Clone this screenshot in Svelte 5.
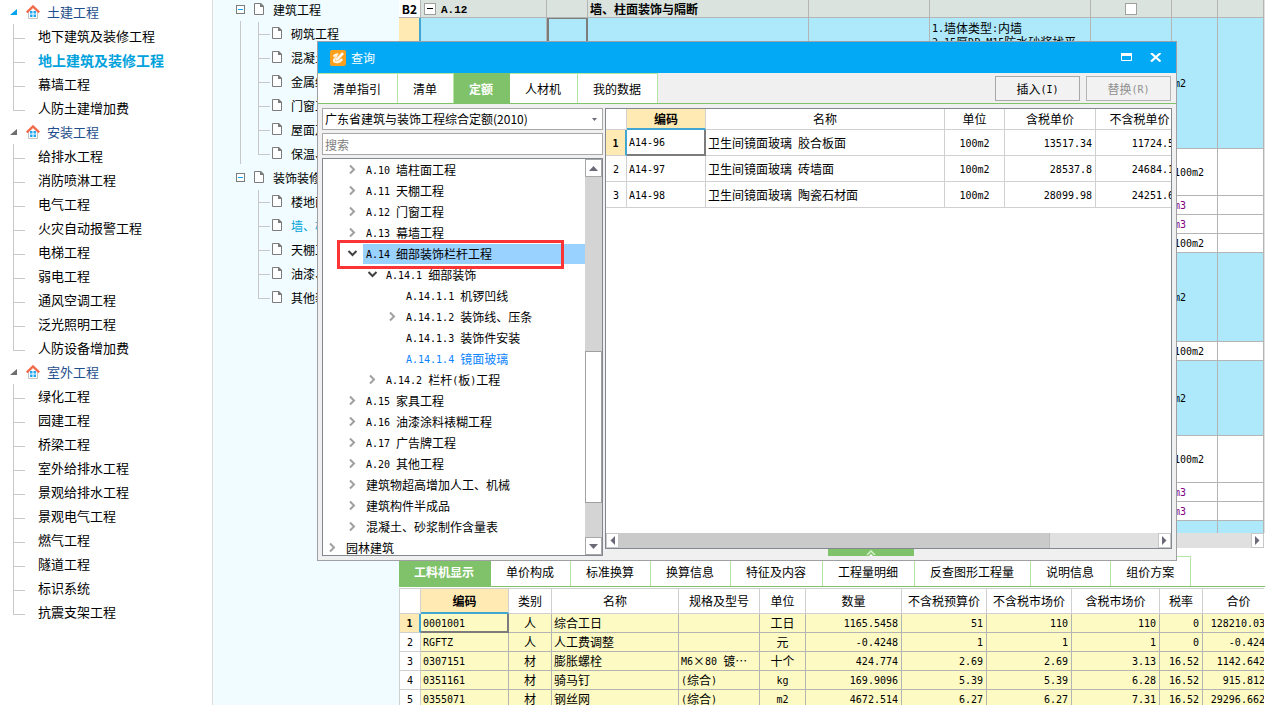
<script>
  const projects = [
    { name: '土建工程', active: true, items: ['地下建筑及装修工程', '地上建筑及装修工程', '幕墙工程', '人防土建增加费'] },
    { name: '安装工程', items: ['给排水工程', '消防喷淋工程', '电气工程', '火灾自动报警工程', '电梯工程', '弱电工程', '通风空调工程', '泛光照明工程', '人防设备增加费'] },
    { name: '室外工程', items: ['绿化工程', '园建工程', '桥梁工程', '室外给排水工程', '景观给排水工程', '景观电气工程', '燃气工程', '隧道工程', '标识系统', '抗震支架工程'] }
  ];
  const currentProject = '地上建筑及装修工程';

  const sections = [
    { name: '建筑工程', items: ['砌筑工程', '混凝土工程', '金属结构工程', '门窗工程', '屋面及防水工程', '保温、隔热工程'] },
    { name: '装饰装修工程', items: ['楼地面装饰工程', '墙、柱面装饰与隔断', '天棚工程', '油漆、涂料工程', '其他装饰工程'] }
  ];
  const currentSection = '墙、柱面装饰与隔断';

  const billRows = [
    { h: 47, unit: '100m2' },
    { h: 19, unit: 'm3', part: true },
    { h: 19, unit: 'm3', part: true },
    { h: 19, unit: '100m2' },
    { h: 89, unit: 'm2', item: true },
    { h: 19, unit: '100m2' },
    { h: 75, unit: 'm2', item: true },
    { h: 47, unit: '100m2' },
    { h: 19, unit: 'm3', part: true },
    { h: 19, unit: 'm3', part: true },
    { h: 60, unit: '', item: true }
  ];

  const detailTabs = ['工料机显示', '单价构成', '标准换算', '换算信息', '特征及内容', '工程量明细', '反查图形工程量', '说明信息', '组价方案'];
  const resourceHeads = ['编码', '类别', '名称', '规格及型号', '单位', '数量', '不含税预算价', '不含税市场价', '含税市场价', '税率', '合价'];
  const resources = [
    ['0001001', '人', '综合工日', '', '工日', '1165.5458', '51', '110', '110', '0', '128210.038'],
    ['RGFTZ', '人', '人工费调整', '', '元', '-0.4248', '1', '1', '1', '0', '-0.4248'],
    ['0307151', '材', '膨胀螺栓', 'M6×80 镀…', '十个', '424.774', '2.69', '2.69', '3.13', '16.52', '1142.6421'],
    ['0351161', '材', '骑马钉', '(综合)', 'kg', '169.9096', '5.39', '5.39', '6.28', '16.52', '915.8127'],
    ['0355071', '材', '钢丝网', '(综合)', 'm2', '4672.514', '6.27', '6.27', '7.31', '16.52', '29296.6628']
  ];
  const resourceAlign = ['l', 'c', 'l', 'l', 'c', 'r', 'r', 'r', 'r', 'r', 'r'];

  const queryTabs = ['清单指引', '清单', '定额', '人材机', '我的数据'];
  const chapters = [
    { d: 1, s: 'shut', t: 'A.10 墙柱面工程' },
    { d: 1, s: 'shut', t: 'A.11 天棚工程' },
    { d: 1, s: 'shut', t: 'A.12 门窗工程' },
    { d: 1, s: 'shut', t: 'A.13 幕墙工程' },
    { d: 1, s: 'open', t: 'A.14 细部装饰栏杆工程', marked: true },
    { d: 2, s: 'open', t: 'A.14.1 细部装饰' },
    { d: 3, t: 'A.14.1.1 机锣凹线' },
    { d: 3, s: 'shut', t: 'A.14.1.2 装饰线、压条' },
    { d: 3, t: 'A.14.1.3 装饰件安装' },
    { d: 3, t: 'A.14.1.4 镜面玻璃', current: true },
    { d: 2, s: 'shut', t: 'A.14.2 栏杆(板)工程' },
    { d: 1, s: 'shut', t: 'A.15 家具工程' },
    { d: 1, s: 'shut', t: 'A.16 油漆涂料裱糊工程' },
    { d: 1, s: 'shut', t: 'A.17 广告牌工程' },
    { d: 1, s: 'shut', t: 'A.20 其他工程' },
    { d: 1, s: 'shut', t: '建筑物超高增加人工、机械' },
    { d: 1, s: 'shut', t: '建筑构件半成品' },
    { d: 1, s: 'shut', t: '混凝土、砂浆制作含量表' },
    { d: 0, s: 'shut', t: '园林建筑' }
  ];
  const quotaHeads = ['编码', '名称', '单位', '含税单价', '不含税单价'];
  const quotas = [
    ['A14-96', '卫生间镜面玻璃 胶合板面', '100m2', '13517.34', '11724.53'],
    ['A14-97', '卫生间镜面玻璃 砖墙面', '100m2', '28537.8', '24684.11'],
    ['A14-98', '卫生间镜面玻璃 陶瓷石材面', '100m2', '28099.98', '24251.67']
  ];
  const quotaAlign = ['l', 'l', 'c', 'r', 'r'];

  // Latin runs are set in a half-width monospace face beside the full-width characters.
  const runs = (text) => text.split(/([\x20-\x7e]+)/).filter(Boolean).map((t) => ({ t, latin: /^[\x20-\x7e]/.test(t) }));
</script>

{#snippet mixed(text)}{#each runs(text) as r}{#if r.latin}<span class="latin">{r.t}</span>{:else}{r.t}{/if}{/each}{/snippet}

{#snippet page()}
  <svg class="page" width="10" height="12" viewBox="0 0 10 12" aria-hidden="true"><path d="M.5 .5h6l3 3v8h-9z" fill="#fff" stroke="#7c7c7c" /><path d="M6 0h1l3 3v1H6z" fill="#7c7c7c" /></svg>
{/snippet}

{#snippet arrow(dir)}
  <svg width="9" height="9" viewBox="0 0 9 9" aria-hidden="true">
    <path fill="#6a6a78" d={{ up: 'M0 7h9L4.500 2z', down: 'M0 2h9L4.500 7z', left: 'M7 0v9L2.500 4.500z', right: 'M2 0v9L6.500 4.500z' }[dir]} />
  </svg>
{/snippet}

<div class="app">
  <nav class="projects" aria-label="项目">
    {#each projects as p}
      <div class="group" class:active={p.active}>
        <svg class="tri" width="8" height="8" viewBox="0 0 8 8" aria-hidden="true"><path d="M7 1v6H0z" fill="currentColor" /></svg>
        <svg width="14" height="14" viewBox="0 0 14 14" aria-hidden="true">
          <path d="M2.500 6.500v7h9v-7L7 2.500z" fill="#fff" stroke="#c4c4c4" />
          <path d="M.8 7.400L7 1.400l6.200 6" fill="none" stroke="#f2694b" stroke-width="2.200" />
          <path d="M4 6h2.500v2.500H4zM7.500 6H10v2.500H7.500zM4 9.500h2.500V12H4zM7.500 9.500H10V12H7.500z" fill="#1ea8f3" />
        </svg>
        <span>{p.name}</span>
      </div>
      <ul>
        {#each p.items as it}
          <li class:current={it === currentProject}>{it}</li>
        {/each}
      </ul>
    {/each}
  </nav>

  <nav class="sections" aria-label="分部">
    {#each sections as s, i}
      <div class="section" class:last={i === sections.length - 1}>
        <div class="head"><span class="fold"></span>{@render page()}<span>{s.name}</span></div>
        <ul>
          {#each s.items as it}
            <li class:current={it === currentSection}>{@render page()}<span>{it}</span></li>
          {/each}
        </ul>
      </div>
    {/each}
  </nav>

  <main>
    <div class="bill">
      <table class="bill-table">
        <colgroup><col class="w22" /><col class="w126" /><col class="w41" /><col class="w221" /><col class="w121" /><col class="w161" /><col class="w81" /><col class="w46" /><col class="w46" /></colgroup>
        <tbody>
          <tr class="part-row">
            <th><b>B2</b></th>
            <td><span class="minus"></span><b class="code">A.12</b></td>
            <td></td>
            <td><b>墙、柱面装饰与隔断</b></td>
            <td></td><td></td>
            <td class="c"><input type="checkbox" aria-label="锁定" /></td>
            <td></td><td></td>
          </tr>
          <tr class="item first">
            <th class="sel"></th>
            <td class="stem"></td>
            <td class="focus"></td>
            <td></td><td></td>
            <td class="feature">{@render mixed('1.墙体类型:内墙')}<br />{@render mixed('2.15厚DP M15防水砂浆找平')}</td>
            <td></td>
            <td>{@render mixed('m2')}</td>
            <td></td>
          </tr>
          {#each billRows as r}
            <tr class:item={r.item} style:height="{r.h}px">
              <th></th><td></td><td></td><td></td><td></td><td></td><td></td>
              <td class:purple={r.part}>{@render mixed(r.unit)}</td>
              <td></td>
            </tr>
          {/each}
        </tbody>
      </table>
    </div>
    <div class="hbar outer"><span></span><button aria-label="向右">{@render arrow('right')}</button></div>

    <div class="tabs detail-tabs" role="tablist">
      {#each detailTabs as t, i}
        <button role="tab" class:on={i === 0} aria-selected={i === 0}>{t}</button>
      {/each}
    </div>
    <div class="resources">
      <table class="grid resource-table">
        <colgroup><col class="w21" /><col class="w88" /><col class="w43" /><col class="w127" /><col class="w81" /><col class="w46" /><col class="w96" /><col class="w85" /><col class="w85" /><col class="w88" /><col class="w43" /><col class="w72" /></colgroup>
        <thead>
          <tr><th></th>{#each resourceHeads as h, i}<th class:picked={i === 0}>{h}</th>{/each}</tr>
        </thead>
        <tbody>
          {#each resources as row, n}
            <tr>
              <th class:sel={n === 0}>{@render mixed(String(n + 1))}</th>
              {#each row as cell, i}<td class={resourceAlign[i]} class:focus={n === 0 && i === 0}>{@render mixed(cell)}</td>{/each}
            </tr>
          {/each}
        </tbody>
      </table>
    </div>
  </main>

  <section class="dialog" role="dialog" aria-label="查询">
    <header>
      <svg width="16" height="16" viewBox="0 0 16 16" aria-hidden="true">
        <rect width="16" height="16" rx="2" fill="#fba01e" />
        <path d="M8.500 3.200C6 3.200 3 4.500 3 6c0 1.200 2 1 3 .6C4.200 8 2.600 9.300 3 11.200 3.400 13 6 13.500 8.500 13c2.500-.6 4.600-2 4.200-3.800-.3-1-1.700-.8-2.700-.2L7.500 11 6 9.500z" fill="#fff4de" />
        <path d="M6 8.500l6-6.300L14.200 4l-6 6.300-2.900.9z" fill="#fff" stroke="#fbb95a" stroke-width=".6" />
      </svg>
      <h1>查询</h1>
      <button aria-label="最大化"><svg width="12" height="9" viewBox="0 0 12 9"><path d="M.5 1h10v6.500H.5z" fill="none" stroke="#fff" /><path d="M0 0h11v3H0z" fill="#fff" /></svg></button>
      <button aria-label="关闭"><svg width="12" height="9" viewBox="0 0 12 9"><path d="M1 0l9.500 8.500M10.500 0L1 8.500" stroke="#fff" stroke-width="2.200" /></svg></button>
    </header>

    <div class="bar">
      <div class="tabs query-tabs" role="tablist">
        {#each queryTabs as t, i}
          <button role="tab" class:on={i === 2} aria-selected={i === 2}>{t}</button>
        {/each}
      </div>
      <div class="actions">
        <button>{@render mixed('插入(I)')}</button>
        <button disabled>{@render mixed('替换(R)')}</button>
      </div>
    </div>

    <div class="body">
      <div class="left">
        <div class="combo">
          <select aria-label="定额库"><option>广东省建筑与装饰工程综合定额(2010)</option></select>
          <svg width="5" height="3" viewBox="0 0 5 3" aria-hidden="true"><path d="M0 0h5L2.500 3z" fill="#6a6a78" /></svg>
        </div>
        <input class="search" type="text" placeholder="搜索" aria-label="搜索" />
        <div class="chapters">
          <ul>
            {#each chapters as c}
              <li class="d{c.d}" class:marked={c.marked} class:current={c.current}>
                <svg class={c.s} width="11" height="11" viewBox="0 0 11 11" aria-hidden="true">
                  {#if c.s === 'shut'}<path d="M3 1.500l4 4-4 4" />{:else if c.s === 'open'}<path d="M1.500 3l4 4 4-4" />{/if}
                </svg>
                <span>{@render mixed(c.t)}</span>
                {#if c.marked}<i class="callout"></i>{/if}
              </li>
            {/each}
          </ul>
          <div class="vbar">
            <button aria-label="向上">{@render arrow('up')}</button>
            <div class="track"><span></span></div>
            <button aria-label="向下">{@render arrow('down')}</button>
          </div>
        </div>
      </div>

      <div class="right">
        <div class="quotas">
          <div class="clip">
            <table class="grid quota-table">
              <colgroup><col class="w21" /><col class="w79" /><col class="w239" /><col class="w60" /><col class="w91" /><col class="w88" /></colgroup>
              <thead>
                <tr><th></th>{#each quotaHeads as h, i}<th class:picked={i === 0}>{h}</th>{/each}</tr>
              </thead>
              <tbody>
                {#each quotas as row, n}
                  <tr>
                    <th class:sel={n === 0}>{@render mixed(String(n + 1))}</th>
                    {#each row as cell, i}<td class={quotaAlign[i]} class:focus={n === 0 && i === 0}>{@render mixed(cell)}</td>{/each}
                  </tr>
                {/each}
              </tbody>
            </table>
          </div>
          <div class="hbar">
            <button aria-label="向左">{@render arrow('left')}</button>
            <div class="track"><span></span></div>
            <button aria-label="向右">{@render arrow('right')}</button>
          </div>
        </div>
        <button class="handle" aria-label="展开"><svg width="10" height="6" viewBox="0 0 10 6"><path d="M1 5l4-4 4 4" stroke="#d5f3c8" stroke-width="1.500" fill="none" /><path d="M3 6l2-2 2 2z" fill="#fff" /></svg></button>
      </div>
    </div>
  </section>
</div>

<style>
  :global(body) { margin: 0; overflow: hidden; }
  .app {
    position: relative;
    display: grid;
    grid-template-columns: 213px 186px minmax(0, 1fr);
    height: 100vh;
    overflow: hidden;
    background: #fff;
    color: #000;
    font: 12px/18px "Noto Sans CJK SC", sans-serif;
    white-space: nowrap;
  }
  .app :global(*) { box-sizing: border-box; }
  ul { list-style: none; margin: 0; padding: 0; }
  button, input, select { font: inherit; color: inherit; }
  button { padding: 0; border: 0; background: none; }
  svg { flex: none; display: block; }
  .latin { font: 10px/12px "DejaVu Sans Mono", monospace; white-space: pre; vertical-align: 1px; }

  .projects { border-right: 1px solid #dcdcdc; font-size: 13px; line-height: 24px; overflow: hidden; }
  .group { display: flex; align-items: center; gap: 8px; height: 24px; padding-left: 10px; color: #1f4e8c; }
  .group span { margin-left: -1px; }
  .tri { color: #6e6e6e; }
  .active .tri { color: #03a3ee; }
  .projects ul { padding-left: 13px; }
  .projects li { position: relative; height: 24px; padding-left: 25px; }
  .projects li::before, .sections li::before {
    content: ''; position: absolute; left: 0; top: 0; width: 11px; height: 14px;
    border-left: 1px solid #c8c8c8; border-bottom: 1px solid #c8c8c8;
  }
  .projects li:not(:last-child)::after, .sections li:not(:last-child)::after {
    content: ''; position: absolute; left: 0; top: 12px; height: 12px; border-left: 1px solid #c8c8c8;
  }
  .sections li::before { height: 12px; }
  .projects .current { color: #00a2dc; font-weight: bold; font-size: 14px; }

  .sections { background: #f0fcff; overflow: hidden; line-height: 24px; }
  .section { position: relative; }
  .section:first-child { margin-top: -2px; }
  .section:not(.last)::before { content: ''; position: absolute; left: 27px; top: 23px; bottom: 2px; border-left: 1px solid #c8c8c8; }
  .head { display: flex; align-items: center; height: 24px; padding-left: 23px; }
  .head .page, .sections li .page { margin-bottom: 2px; }
  .head span:last-child { padding-left: 9px; }
  .head .page { margin-left: 9px; }
  .fold { position: relative; width: 9px; height: 9px; margin-bottom: 2px; border: 1px solid #7c7c7c; background: #fff; }
  .fold::after { content: ''; position: absolute; left: 1px; right: 1px; top: 3px; height: 1px; background: #03a3ee; }
  .sections ul { padding-left: 45px; }
  .sections li { position: relative; display: flex; align-items: center; gap: 9px; height: 24px; padding-left: 14px; }
  .sections .current { color: #00a2dc; }

  main { display: flex; flex-direction: column; min-width: 0; overflow: hidden; }
  table { border-collapse: separate; border-spacing: 0; table-layout: fixed; }
  td, th { padding: 0 2px; border: solid #b4b4b4; border-width: 0 1px 1px 0; font-weight: normal; overflow: hidden; }
  .w21 { width: 21px; } .w22 { width: 22px; } .w41 { width: 41px; } .w43 { width: 43px; } .w46 { width: 46px; } .w60 { width: 60px; }
  .w72 { width: 72px; } .w79 { width: 79px; } .w81 { width: 81px; } .w85 { width: 85px; } .w88 { width: 88px; } .w91 { width: 91px; }
  .w96 { width: 96px; } .w121 { width: 121px; } .w126 { width: 126px; } .w127 { width: 127px; } .w161 { width: 161px; }
  .w221 { width: 221px; } .w239 { width: 239px; }
  .l { text-align: left; } .c { text-align: center; } .r { text-align: right; padding-right: 3px; }

  .bill { flex: 0 0 533px; overflow: hidden; background: #e0e0e0; }
  .bill-table { width: 865px; background: #fff; }
  .bill-table th { padding: 0; line-height: 16px; }
  .bill-table tr { height: 19px; }
  .bill-table .part-row { height: 18px; }
  .part-row td { background: #dae3de; line-height: 16px; }
  .bill-table .first { height: 131px; }
  .bill-table .item td { background: #ade8fb; }
  .bill-table td { line-height: 14px; }
  .bill-table .feature { vertical-align: top; padding-top: 3px; line-height: 13px; }
  .minus { position: relative; display: inline-block; width: 12px; height: 12px; margin-left: 1px; border: 1px solid #a0a0a0; background: #fff; vertical-align: middle; }
  .minus::after { content: ''; position: absolute; left: 2px; right: 2px; top: 4px; height: 1px; background: #000; }
  .code { padding-left: 5px; font: bold 11px/14px "Liberation Mono", monospace; }
  .part-row input { appearance: none; display: block; width: 12px; height: 12px; margin: 0 auto; border: 1px solid #a0a0a0; background: #fff; }
  .bill-table .sel { border-right: 2px solid #41a6d2; }
  .bill-table .focus { border: 2px solid #7c7c7c; border-top-width: 1px; }
  .purple { color: #800080; }

  .sel { background: #ffeab4; font-weight: bold; }
  .sel .latin { font-weight: bold; }

  .hbar { display: flex; height: 15px; background: #e0e0e0; }
  .hbar button { display: grid; place-items: center; width: 13px; background: #fff; border: 1px solid #c8c8c8; }
  .hbar.outer { flex: none; width: 865px; justify-content: space-between; }

  .tabs { display: flex; }
  .tabs button { border-right: 1px solid #b5e5a0; background: #fff; padding: 0 16px 0 15px; }
  .tabs .on { background: #7fc269; color: #fff; font-weight: bold; border-color: #7fc269; }
  .detail-tabs { margin-top: 8px; height: 31px; border-bottom: 1px solid #7fc269; flex: none; }
  .detail-tabs button { border-top: 1px solid #b5e5a0; }
  .detail-tabs button.on { border-color: #7fc269; }

  .resources { flex: 1; overflow: hidden; margin: 1px 1px 0 0; border-left: 1px solid #d0d0d0; }
  .grid thead th { border-color: #d0d0d0; background: #fff; }
  .grid tbody th { border-color: #d0d0d0; }
  .grid .picked { background: #ffeab4; border-bottom: 2px solid #41a6d2; font-weight: bold; }
  .resource-table { width: 875px; border-top: 1px solid #d0d0d0; }
  .resource-table td, .resource-table tbody th { height: 19px; line-height: 16px; }
  .resource-table td { background: #fdfac4; }
  .resource-table thead th { height: 25px; }
  .grid tbody .sel { background: #ffeab4; border-right: 2px solid #41a6d2; }
  .grid .focus { border-right: 2px solid #7c7c7c; border-bottom: 2px solid #7c7c7c; }

  .dialog {
    position: absolute; left: 317px; right: 88px; top: 41px; bottom: 144px;
    display: flex; flex-direction: column;
    border: 1px solid #a0a0a4; background: #f0f0f0;
  }
  header { display: flex; align-items: center; height: 31px; flex: none; padding: 0 14px 0 12px; background: #03a9f4; color: #fff; }
  h1 { flex: 1; margin: 0 0 0 5px; font-size: 12px; line-height: 18px; font-weight: normal; }
  header button { margin-left: 17px; }
  .bar { display: flex; justify-content: space-between; flex: none; height: 31px; border-bottom: 1px solid #7fc269; }
  .query-tabs button { border-top: 1px solid #b5e5a0; }
  .query-tabs .on { border-color: #7fc269; }
  .actions { display: flex; gap: 6px; padding: 3px 5px 2px 0; }
  .actions button { width: 85px; border: 1px solid #a8a8a8; background: #f2f2f2; }
  .actions button:disabled { color: #909090; border-color: #b4b4b4; }

  .body { flex: 1; min-height: 0; display: flex; gap: 2px; padding: 4px; }
  .left { display: flex; flex-direction: column; width: 281px; gap: 3px; }
  .combo { position: relative; height: 22px; flex: none; }
  select { appearance: none; display: block; width: 100%; height: 100%; margin: 0; padding: 0 2px; border: 1px solid #a8a8a8; border-radius: 0; background: #fff; }
  .combo svg { position: absolute; right: 6px; top: 10px; pointer-events: none; }
  .search { height: 22px; flex: none; padding: 0 2px; border: 1px solid #a8a8a8; border-radius: 0; background: #fff; outline: 0; }
  .search::placeholder { color: #808080; opacity: 1; }
  .chapters { display: flex; flex: 1; min-height: 0; border: 1px solid #828790; background: #fff; }
  .chapters ul { flex: 1; overflow: hidden; }
  .chapters li { position: relative; display: flex; align-items: center; gap: 5px; height: 21px; padding-left: 4px; line-height: 20px; }
  .chapters li > span { flex: 1; padding-left: 3px; }
  .chapters .d1 { padding-left: 24px; }
  .chapters .d2 { padding-left: 44px; }
  .chapters .d3 { padding-left: 64px; }
  .chapters li path { fill: none; stroke: #a0a0a0; stroke-width: 2; }
  .chapters .open path { stroke: #404040; }
  .marked > span { background: #99d1ff; }
  .chapters .current { color: #0a84ff; }
  .callout { position: absolute; left: 14px; top: -3px; width: 227px; height: 29px; border: 3px solid #fb3535; z-index: 1; }
  .vbar { display: flex; flex-direction: column; width: 17px; background: #d4d4d4; }
  .vbar button { display: grid; place-items: center; height: 18px; flex: none; border: 1px solid #a8a8a8; background: #fff; }
  .vbar .track { flex: 1; display: flex; flex-direction: column; }
  .vbar .track::before { content: ''; flex: 176; }
  .vbar .track::after { content: ''; flex: 34; }
  .vbar .track span { flex: 152; border: 1px solid #a0a0a0; background: #fff; }

  .right { flex: 1; min-width: 0; display: flex; flex-direction: column; }
  .quotas { flex: 1; min-height: 0; display: flex; flex-direction: column; border: 1px solid #828790; background: #fff; }
  .clip { flex: 1; overflow: hidden; }
  .quota-table { width: 578px; }
  .quota-table th, .quota-table td { border-color: #d0d0d0; }
  .quota-table thead th { height: 21px; }
  .quota-table tbody td { height: 26px; }
  .quota-table .picked { border-bottom-color: #41a6d2; }
  .quota-table .focus { border-color: #7c7c7c; }
  .quota-table tbody .sel { border-right-color: #41a6d2; }
  .hbar .track { flex: 1; display: flex; }
  .hbar .track::after { content: ''; flex: 108; }
  .hbar .track span { flex: 431; background: #cacaca; border-right: 1px solid #bcbcbc; }
  .handle { align-self: center; display: grid; place-items: center; width: 86px; height: 7px; margin-right: 36px; background: #7fc269; }
</style>
